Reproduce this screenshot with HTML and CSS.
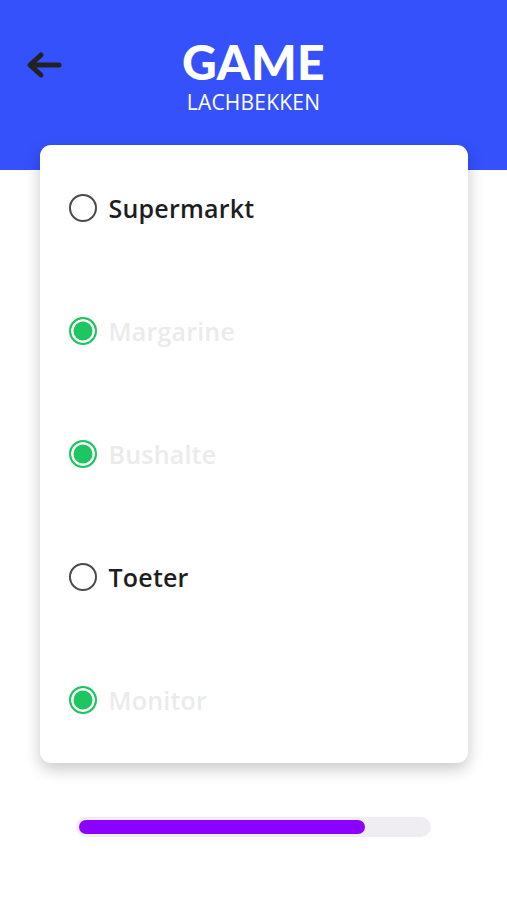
FILE: index.html
```html
<!DOCTYPE html>
<html lang="nl">
<head>
<meta charset="utf-8">
<link rel="stylesheet" href="styles.css">
</head>
<body>
<header class="header">
  <button class="back" aria-label="Terug">
    <svg width="36" height="28" viewBox="0 0 36 28"><path d="M33 14H5M15 4L4 14l11 10" fill="none" stroke="#222" stroke-width="5" stroke-linecap="round" stroke-linejoin="round"/></svg>
  </button>
  <div class="titles">
    <div class="title">GAME</div>
    <div class="subtitle">LACHBEKKEN</div>
  </div>
</header>
<main class="main">
  <section class="card">
    <div class="row"><span class="radio"></span><span class="label">Supermarkt</span></div>
    <div class="row done"><span class="radio checked"></span><span class="label">Margarine</span></div>
    <div class="row done"><span class="radio checked"></span><span class="label">Bushalte</span></div>
    <div class="row"><span class="radio"></span><span class="label">Toeter</span></div>
    <div class="row done"><span class="radio checked"></span><span class="label">Monitor</span></div>
  </section>
  <div class="progress"><div class="fill" style="width:82%"></div></div>
</main>
</body>
</html>
```
FILE: styles.css
```css
* { box-sizing: border-box; }
html, body { margin: 0; padding: 0; background: #fff; }
body { font-family: Lato, "Noto Sans", sans-serif; width: 507px; height: 900px; overflow: hidden; }
.header {
  background: #3551fc;
  height: 170px;
  position: relative;
  display: flex;
  justify-content: center;
  padding-top: 36px;
}
.back {
  position: absolute;
  left: 26px;
  top: 51px;
  border: 0;
  background: none;
  padding: 0;
  display: flex;
}
.titles { display: flex; flex-direction: column; align-items: center; }
.title {
  color: #fff;
  font-weight: 900;
  font-size: 48px;
  line-height: 52px;
  letter-spacing: 0.5px;
}
.subtitle {
  color: #fff;
  font-family: "Open Sans", Lato, sans-serif;
  font-weight: 500;
  font-size: 21px;
  line-height: 22px;
  margin-top: 3px;
  letter-spacing: 0.2px;
}
.main { display: flex; flex-direction: column; align-items: center; margin-top: -25px; }
.card {
  width: 428px;
  height: 618px;
  background: #fff;
  border-radius: 11px;
  box-shadow: 0 6px 16px rgba(0,0,0,0.22);
  padding: 1px 0;
  display: flex;
  flex-direction: column;
  position: relative;
}
.row {
  height: 123px;
  display: flex;
  align-items: center;
  padding-left: 29px;
  gap: 12px;
}
.radio {
  width: 28px;
  height: 28px;
  border-radius: 50%;
  border: 2px solid #4a4a4a;
  flex: none;
}
.radio.checked {
  border: 2.5px solid #1dc660;
  background: #1dc660;
  box-shadow: inset 0 0 0 2.5px #fff;
}
.label {
  font-family: "Open Sans", Lato, sans-serif;
  font-size: 25px;
  font-weight: 600;
  color: #1e1e1e;
  letter-spacing: 0.2px;
}
.done .label { color: #ebebeb; }
.progress {
  margin-top: 54px;
  width: 355px;
  height: 20px;
  border-radius: 10px;
  background: #efedf2;
  padding: 3px;
}
.fill {
  height: 14px;
  border-radius: 7px;
  background: #8c00ff;
}
```
